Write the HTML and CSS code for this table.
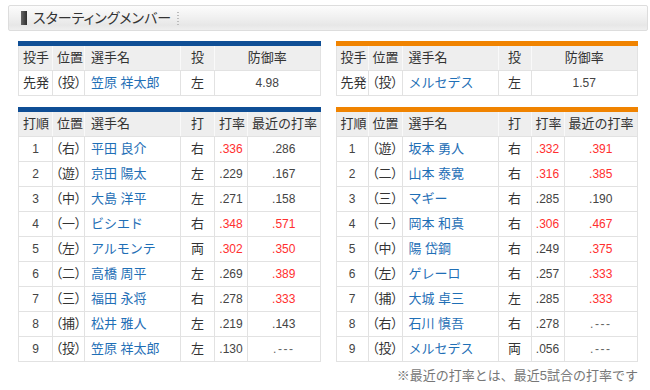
FILE: index.html
```html
<!DOCTYPE html>
<html lang="ja">
<head>
<meta charset="utf-8">
<title>スターティングメンバー</title>
<link rel="stylesheet" href="styles.css">
</head>
<body>
<div class="page">
  <div class="title-bar">
    <span class="mark"></span>
    <span class="title">スターティングメンバー</span>
    <span class="sep"></span>
  </div>

  <div class="teams">
    <div class="team home">
      <table class="grid pitch">
        <colgroup><col class="w-a"><col class="w-b"><col class="w-name"><col class="w-hand"><col class="w-era"></colgroup>
        <tr class="head"><th>投手</th><th>位置</th><th class="l">選手名</th><th>投</th><th>防御率</th></tr>
        <tr><td>先発</td><td class="pos">（投）</td><td class="name">笠原 祥太郎</td><td>左</td><td class="num">4.98</td></tr>
      </table>
      <table class="grid bat">
        <colgroup><col class="w-a"><col class="w-b"><col class="w-name"><col class="w-hand"><col class="w-avg"><col class="w-rec"></colgroup>
        <tr class="head"><th>打順</th><th>位置</th><th class="l">選手名</th><th>打</th><th>打率</th><th>最近の打率</th></tr>
        <tr><td class="num">1</td><td class="pos">（右）</td><td class="name">平田 良介</td><td>右</td><td class="num hot">.336</td><td class="num">.286</td></tr>
        <tr><td class="num">2</td><td class="pos">（遊）</td><td class="name">京田 陽太</td><td>左</td><td class="num">.229</td><td class="num">.167</td></tr>
        <tr><td class="num">3</td><td class="pos">（中）</td><td class="name">大島 洋平</td><td>左</td><td class="num">.271</td><td class="num">.158</td></tr>
        <tr><td class="num">4</td><td class="pos">（一）</td><td class="name">ビシエド</td><td>右</td><td class="num hot">.348</td><td class="num hot">.571</td></tr>
        <tr><td class="num">5</td><td class="pos">（左）</td><td class="name">アルモンテ</td><td>両</td><td class="num hot">.302</td><td class="num hot">.350</td></tr>
        <tr><td class="num">6</td><td class="pos">（二）</td><td class="name">高橋 周平</td><td>左</td><td class="num">.269</td><td class="num hot">.389</td></tr>
        <tr><td class="num">7</td><td class="pos">（三）</td><td class="name">福田 永将</td><td>右</td><td class="num">.278</td><td class="num hot">.333</td></tr>
        <tr><td class="num">8</td><td class="pos">（捕）</td><td class="name">松井 雅人</td><td>左</td><td class="num">.219</td><td class="num">.143</td></tr>
        <tr><td class="num">9</td><td class="pos">（投）</td><td class="name">笠原 祥太郎</td><td>左</td><td class="num">.130</td><td class="num nil">.---</td></tr>
      </table>
    </div>

    <div class="team away">
      <table class="grid pitch">
        <colgroup><col class="w-a"><col class="w-b"><col class="w-name"><col class="w-hand"><col class="w-era"></colgroup>
        <tr class="head"><th>投手</th><th>位置</th><th class="l">選手名</th><th>投</th><th>防御率</th></tr>
        <tr><td>先発</td><td class="pos">（投）</td><td class="name">メルセデス</td><td>左</td><td class="num">1.57</td></tr>
      </table>
      <table class="grid bat">
        <colgroup><col class="w-a"><col class="w-b"><col class="w-name"><col class="w-hand"><col class="w-avg"><col class="w-rec"></colgroup>
        <tr class="head"><th>打順</th><th>位置</th><th class="l">選手名</th><th>打</th><th>打率</th><th>最近の打率</th></tr>
        <tr><td class="num">1</td><td class="pos">（遊）</td><td class="name">坂本 勇人</td><td>右</td><td class="num hot">.332</td><td class="num hot">.391</td></tr>
        <tr><td class="num">2</td><td class="pos">（二）</td><td class="name">山本 泰寛</td><td>右</td><td class="num hot">.316</td><td class="num hot">.385</td></tr>
        <tr><td class="num">3</td><td class="pos">（三）</td><td class="name">マギー</td><td>右</td><td class="num">.285</td><td class="num">.190</td></tr>
        <tr><td class="num">4</td><td class="pos">（一）</td><td class="name">岡本 和真</td><td>右</td><td class="num hot">.306</td><td class="num hot">.467</td></tr>
        <tr><td class="num">5</td><td class="pos">（中）</td><td class="name">陽 岱鋼</td><td>右</td><td class="num">.249</td><td class="num hot">.375</td></tr>
        <tr><td class="num">6</td><td class="pos">（左）</td><td class="name">ゲレーロ</td><td>右</td><td class="num">.257</td><td class="num hot">.333</td></tr>
        <tr><td class="num">7</td><td class="pos">（捕）</td><td class="name">大城 卓三</td><td>左</td><td class="num">.285</td><td class="num hot">.333</td></tr>
        <tr><td class="num">8</td><td class="pos">（右）</td><td class="name">石川 慎吾</td><td>右</td><td class="num">.278</td><td class="num nil">.---</td></tr>
        <tr><td class="num">9</td><td class="pos">（投）</td><td class="name">メルセデス</td><td>両</td><td class="num">.056</td><td class="num nil">.---</td></tr>
      </table>
    </div>
  </div>

  <p class="note">※最近の打率とは、最近5試合の打率です</p>
</div>
</body>
</html>
```

FILE: styles.css
```css
* { box-sizing: border-box; }

html, body {
  margin: 0;
  padding: 0;
  background: #ffffff;
}

body {
  font-family: "Liberation Sans", "Noto Sans CJK JP", sans-serif;
  color: #333333;
}

.page {
  width: 640px;
  margin: 5px 0 0 8px;
}

.title-bar {
  display: flex;
  align-items: center;
  height: 26px;
  padding-left: 12px;
  border: 1px solid #dddddd;
  border-radius: 2px;
  background: linear-gradient(#fcfcfc 0%, #f1f1f1 45%, #e7e7e7 80%, #efefef 100%);
}

.mark {
  width: 6px;
  height: 14px;
  background: linear-gradient(90deg, #666666, #2f2f2f);
}

.title {
  margin-left: 6px;
  font-size: 14px;
  line-height: 16px;
  color: #333333;
  font-feature-settings: "palt";
}

.sep {
  width: 2px;
  height: 13px;
  margin-left: 6px;
  background: repeating-linear-gradient(#bbbbbb 0 1px, transparent 1px 3px);
}

.teams {
  display: grid;
  grid-template-columns: 1fr 1fr;
  column-gap: 15px;
  padding: 10px 10px 0;
}

.grid {
  width: 100%;
  table-layout: fixed;
  border-collapse: collapse;
  margin-bottom: 11px;
  font-size: 13px;
}

.grid.bat { margin-bottom: 0; }

.home .grid { border-top: 5px solid #0f4e95; }
.away .grid { border-top: 5px solid #f08300; }

.grid th,
.grid td {
  box-sizing: content-box;
  height: 24px;
  padding: 0 4px;
  border: 1px solid #e2e2e2;
  text-align: center;
  font-weight: normal;
  line-height: 16px;
  white-space: nowrap;
}

.grid th {
  background: #eeeeee;
  color: #333333;
  border-color: #e2e2e2 #f9f9f9 #e2e2e2 #f9f9f9;
  border-top: none;
}

.grid th:first-child { border-left-color: #e2e2e2; }
.grid th:last-child { border-right-color: #e2e2e2; }

.grid th.l,
.grid td.name {
  text-align: left;
  padding-left: 6px;
}

.grid td.name { color: #1f6fb6; }

.grid td.pos {
  padding: 0;
  font-feature-settings: "palt";
}

.grid td.num {
  font-size: 12px;
  color: #444444;
}

.grid td.hot { color: #ff2f2f; }

.grid td.nil {
  letter-spacing: 1.5px;
  color: #666666;
}

.home .w-a { width: 34px; }
.home .w-b { width: 32px; }
.away .w-a { width: 32px; }
.away .w-b { width: 34px; }
.w-name { width: 96px; }
.w-hand { width: 34px; }
.away .w-hand { width: 33px; }
.w-avg { width: 33px; }
.w-rec { width: auto; }
.w-era { width: auto; }

.note {
  margin: 5px 10px 0 0;
  text-align: right;
  font-size: 13px;
  line-height: 18px;
  color: #777777;
}
```
